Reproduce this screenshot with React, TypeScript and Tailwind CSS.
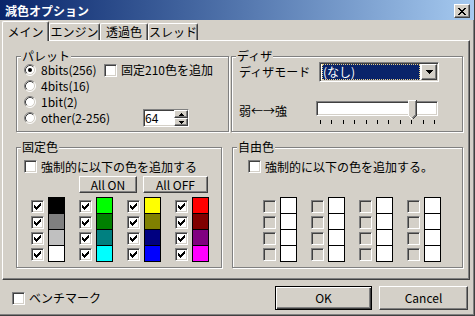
import React from "react";

const FONT = "font-['Noto_Sans_CJK_JP',sans-serif]";

const raised =
  "border border-t-white border-l-white border-r-[#404040] border-b-[#404040] shadow-[inset_-1px_-1px_0_#808080]";
const sunken =
  "border border-t-[#808080] border-l-[#808080] border-r-white border-b-white shadow-[inset_1px_1px_0_#404040,inset_-1px_-1px_0_#d4d0c8]";

function Check({ checked = false, disabled = false }: { checked?: boolean; disabled?: boolean }) {
  const runs = [2, 3, 4, 3, 2, 1, 0];
  return (
    <span
      className={`relative block w-[13px] h-[13px] shrink-0 ${sunken} ${
        disabled ? "bg-[#d4d0c8]" : "bg-white"
      }`}
    >
      {checked && (
        <svg className="absolute left-0 top-0" width="11" height="11" viewBox="0 0 11 11" shapeRendering="crispEdges">
          {runs.map((y, i) => (
            <rect key={i} x={2 + i} y={2 + y} width="1" height="3" fill="#000" />
          ))}
        </svg>
      )}
    </span>
  );
}

function Radio({ checked = false }: { checked?: boolean }) {
  return (
    <svg width="12" height="12" viewBox="0 0 12 12" className="shrink-0 block">
      <circle cx="6" cy="6" r="5" fill="#fff" />
      <path d="M2.11 9.89A5.5 5.5 0 0 1 9.89 2.11" fill="none" stroke="#808080" />
      <path d="M9.89 2.11A5.5 5.5 0 0 1 2.11 9.89" fill="none" stroke="#fff" />
      <path d="M2.82 9.18A4.5 4.5 0 0 1 9.18 2.82" fill="none" stroke="#404040" />
      <path d="M9.18 2.82A4.5 4.5 0 0 1 2.82 9.18" fill="none" stroke="#d4d0c8" />
      {checked && <circle cx="6" cy="6" r="2" fill="#000" />}
    </svg>
  );
}

function Group({
  label,
  className,
  children,
}: {
  label: string;
  className: string;
  children: React.ReactNode;
}) {
  return (
    <div
      className={`relative shrink-0 border border-[#808080] shadow-[inset_1px_1px_0_#fff,1px_1px_0_#fff] ${className}`}
    >
      <span className="absolute left-[4px] -top-[7px] px-[1px] bg-[#d4d0c8] text-[12px] leading-[12px] whitespace-nowrap">
        {label}
      </span>
      {children}
    </div>
  );
}

function Button({ className, children }: { className: string; children: React.ReactNode }) {
  return (
    <div className={`flex items-center justify-center bg-[#d4d0c8] ${raised} ${className}`}>
      <span className="leading-[14px]">{children}</span>
    </div>
  );
}

function Spin() {
  return (
    <div className={`w-[46px] h-[18px] bg-white flex ${sunken}`}>
      <span className="flex-1 pl-[1px] leading-[16px]">64</span>
      <div className="w-[14px] flex flex-col">
        <div className={`flex-1 bg-[#d4d0c8] ${raised} flex items-center justify-center`}>
          <svg width="5" height="3" viewBox="0 0 5 3" shapeRendering="crispEdges">
            <path d="M2 0h1v1h1v1h1v1H0V2h1V1h1z" fill="#000" />
          </svg>
        </div>
        <div className={`flex-1 bg-[#d4d0c8] ${raised} flex items-center justify-center`}>
          <svg width="5" height="3" viewBox="0 0 5 3" shapeRendering="crispEdges">
            <path d="M0 0h5v1H4v1H3v1H2V2H1V1H0z" fill="#000" />
          </svg>
        </div>
      </div>
    </div>
  );
}

function Combo() {
  return (
    <div className={`w-[120px] h-[20px] bg-white flex p-[1px] ${sunken}`}>
      <div className="ml-[1px] mr-[1px] flex-1 bg-[#0a246a] border border-dotted border-[#e9cf86] text-white leading-[14px] flex items-center">
        (なし)
      </div>
      <div className={`w-[16px] bg-[#d4d0c8] ${raised} flex items-center justify-center`}>
        <svg width="7" height="4" viewBox="0 0 7 4" shapeRendering="crispEdges">
          <path d="M0 0h7v1H6v1H5v1H4v1H3V3H2V2H1V1H0z" fill="#000" />
        </svg>
      </div>
    </div>
  );
}

function Slider() {
  const ticks = Array.from({ length: 11 }, (_, i) => Math.round(4 + i * 11.4));
  return (
    <div className="relative w-[122px] h-[24px]">
      <div className={`mt-[1px] h-[15px] bg-white ${sunken}`} />
      <svg className="absolute left-[92px] top-0" width="9" height="20" viewBox="0 0 9 20" shapeRendering="crispEdges">
        <path d="M0 0H9V15L4.5 19.5L0 15Z" fill="#d4d0c8" />
        <path d="M0.5 15.5V0.5H8" fill="none" stroke="#fff" />
        <path d="M0.5 15.5L4 19" fill="none" stroke="#fff" />
        <path d="M8.5 0V15.5L4.5 19.5" fill="none" stroke="#404040" />
        <path d="M7.5 1V15L4.5 18" fill="none" stroke="#808080" />
      </svg>
      <svg className="mt-[4px] block" width="122" height="4" viewBox="0 0 122 4" shapeRendering="crispEdges">
        {ticks.map((x) => (
          <rect key={x} x={x} y="0" width="1" height="4" fill="#000" />
        ))}
      </svg>
    </div>
  );
}

function ColorColumn({
  swatches,
  checked,
  disabled,
}: {
  swatches: string[];
  checked?: boolean;
  disabled?: boolean;
}) {
  return (
    <div className="flex gap-[4px]">
      <div className="flex flex-col gap-[3px] pt-[3px]">
        {swatches.map((_, i) => (
          <Check key={i} checked={checked} disabled={disabled} />
        ))}
      </div>
      <div className="flex flex-col">
        {swatches.map((c, i) => (
          <div key={i} className={`w-[17px] h-[17px] border border-black ${i > 0 ? "-mt-px" : ""} ${c}`} />
        ))}
      </div>
    </div>
  );
}

function Tab({ selected = false, className, children }: { selected?: boolean; className: string; children: React.ReactNode }) {
  return (
    <div
      className={`relative flex justify-center bg-[#d4d0c8] border-l border-t border-r border-l-white border-t-white border-r-[#404040] shadow-[inset_-1px_0_0_#808080] rounded-t-[2px] leading-[14px] ${
        selected ? "h-[20px] -mb-px z-10 pt-[3px]" : "h-[17px] pt-[1px]"
      } ${className}`}
    >
      {children}
    </div>
  );
}

const fixedCols = [
  ["bg-[#000000]", "bg-[#808080]", "bg-[#c0c0c0]", "bg-[#ffffff]"],
  ["bg-[#00ff00]", "bg-[#008000]", "bg-[#008080]", "bg-[#00ffff]"],
  ["bg-[#ffff00]", "bg-[#808000]", "bg-[#000080]", "bg-[#0000ff]"],
  ["bg-[#ff0000]", "bg-[#800000]", "bg-[#800080]", "bg-[#ff00ff]"],
];
const freeCol = ["bg-white", "bg-white", "bg-white", "bg-white"];

export default function App() {
  return (
    <div
      className={`w-[475px] h-[316px] bg-[#d4d0c8] flex flex-col border-r border-b border-r-[#404040] border-b-[#404040] shadow-[inset_-1px_-1px_0_#808080] text-black text-[12px] leading-[14px] overflow-hidden ${FONT}`}
    >
      {/* title bar */}
      <div className="h-[20px] shrink-0 flex bg-linear-to-r from-[#0a246a] to-[#a6caf0]">
        <span className="pl-[5px] pt-[4px] text-white font-bold text-[12px] leading-[14px]">減色オプション</span>
        <div className={`ml-auto mr-[4px] mt-[4px] w-[16px] h-[14px] bg-[#d4d0c8] ${raised} flex items-center justify-center`}>
          <svg width="8" height="7" viewBox="0 0 8 7" shapeRendering="crispEdges">
            <path
              d="M0 0h2v1h1v1h2V1h1V0h2v1H7v1H6v1H5v1h1v1h1v1h1v1H6V6H5V5H3v1H2v1H0V6h1V5h1V4h1V3H2V2H1V1H0z"
              fill="#000"
            />
          </svg>
        </div>
      </div>

      {/* tabs */}
      <div className="mt-[1px] h-[19px] shrink-0 flex items-end pl-[2px]">
        <Tab selected className="w-[47px]">メイン</Tab>
        <Tab className="w-[51px]">エンジン</Tab>
        <Tab className="w-[48px]">透過色</Tab>
        <Tab className="w-[50px]">スレッド</Tab>
      </div>

      {/* tab page */}
      <div className="ml-[2px] w-[468px] h-[240px] shrink-0 border border-t-white border-l-white border-r-[#404040] border-b-[#404040] shadow-[inset_-1px_-1px_0_#808080] pt-[15px] pl-[13px] flex flex-col">
        <div className="flex">
          <Group label="パレット" className="w-[213px] h-[76px]">
            <div className="pt-[5px] pl-[7px] flex flex-col">
              <div className="h-[16px] flex items-center">
                <div className="w-[80px] flex items-center gap-[5px]">
                  <Radio checked />
                  <span>8bits(256)</span>
                </div>
                <Check />
                <span className="ml-[4px]">固定210色を追加</span>
              </div>
              <div className="h-[16px] flex items-center gap-[5px]">
                <Radio />
                <span>4bits(16)</span>
              </div>
              <div className="h-[16px] flex items-center gap-[5px]">
                <Radio />
                <span>1bit(2)</span>
              </div>
              <div className="h-[16px] flex items-center">
                <div className="w-[119px] flex items-center gap-[5px]">
                  <Radio />
                  <span>other(2-256)</span>
                </div>
                <Spin />
              </div>
            </div>
          </Group>

          <Group label="ディザ" className="ml-[2px] w-[232px] h-[76px]">
            <div className="pt-[5px] pl-[7px]">
              <div className="h-[20px] flex items-center">
                <span className="w-[80px]">ディザモード</span>
                <Combo />
              </div>
              <div className="mt-[18px] flex">
                <span className="w-[77px] h-[22px] flex items-center">弱←→強</span>
                <Slider />
              </div>
            </div>
          </Group>
        </div>

        <div className="mt-[15px] flex">
          <Group label="固定色" className="w-[206px] h-[121px]">
            <div className="pt-[12px] pl-[7px] flex flex-col">
              <div className="h-[13px] flex items-center">
                <Check />
                <span className="ml-[4px] whitespace-nowrap">強制的に以下の色を追加する</span>
              </div>
              <div className="mt-[3px] ml-[55px] flex gap-[6px]">
                <Button className="w-[58px] h-[17px]">All ON</Button>
                <Button className="w-[65px] h-[17px]">All OFF</Button>
              </div>
              <div className="mt-[4px] ml-[7px] flex gap-[14px]">
                {fixedCols.map((col, i) => (
                  <ColorColumn key={i} swatches={col} checked />
                ))}
              </div>
            </div>
          </Group>

          <Group label="自由色" className="ml-[10px] w-[231px] h-[121px]">
            <div className="pt-[12px] pl-[15px] flex flex-col">
              <div className="h-[13px] flex items-center">
                <Check />
                <span className="ml-[4px] whitespace-nowrap">強制的に以下の色を追加する。</span>
              </div>
              <div className="mt-[24px] ml-[15px] flex gap-[14px]">
                {[0, 1, 2, 3].map((i) => (
                  <ColorColumn key={i} swatches={freeCol} disabled />
                ))}
              </div>
            </div>
          </Group>
        </div>
      </div>

      {/* bottom bar */}
      <div className="flex items-start pt-[6px] pl-[12px] pr-[6px]">
        <div className="mt-[5px] flex items-center">
          <Check />
          <span className="ml-[4px]">ベンチマーク</span>
        </div>
        <div className="ml-auto w-[97px] h-[24px] border border-black flex items-center justify-center shadow-[inset_1px_1px_0_#fff,inset_-1px_-1px_0_#404040,inset_-2px_-2px_0_#808080]">
          OK
        </div>
        <Button className="ml-[7px] w-[89px] h-[24px]">Cancel</Button>
      </div>
    </div>
  );
}
